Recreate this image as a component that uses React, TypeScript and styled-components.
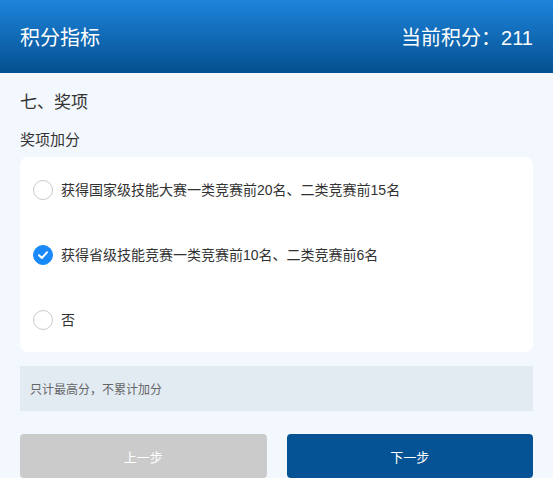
import React, { FC, useState } from 'react';
import styled, { createGlobalStyle } from 'styled-components';

const GlobalStyle = createGlobalStyle`
  * { box-sizing: border-box; }
  html, body {
    margin: 0;
    padding: 0;
    background: #F3F8FE;
    font-family: "Liberation Sans", "Noto Sans CJK SC", sans-serif;
  }
`

const Page = styled.div`
  width: 553px;
  min-height: 478px;
  background: #F3F8FE;
`
const Header = styled.header`
  display: flex;
  justify-content: space-between;
  align-items: center;
  height: 73px;
  padding: 0 20px;
  background: linear-gradient(180deg, #1E84DC 0%, #04508F 100%);
  color: #FFFFFF;
  font-size: 20px;
`
const Content = styled.div`
  padding: 18px 20px 0;
`
const SectionTitle = styled.div`
  font-size: 17px;
  line-height: 24px;
  color: #333333;
`
const SubTitle = styled.div`
  margin-top: 14px;
  font-size: 15px;
  line-height: 22px;
  color: #333333;
`
const Card = styled.div`
  margin-top: 6px;
  background: #FFFFFF;
  border-radius: 8px;
`
const Option = styled.label`
  display: flex;
  align-items: center;
  height: 65px;
  padding: 0 13px;
  cursor: pointer;
`
const RadioIcon = styled.span<{checked: boolean}>`
  display: flex;
  justify-content: center;
  align-items: center;
  width: 20px;
  height: 20px;
  border-radius: 50%;
  border: 1px solid ${props => props.checked ? '#1989FA' : '#C8C9CC'};
  background: ${props => props.checked ? '#1989FA' : '#FFFFFF'};
  flex-shrink: 0;
`
const OptionText = styled.span`
  margin-left: 8px;
  font-size: 14px;
  line-height: 20px;
  color: #323233;
`
const Tip = styled.div`
  display: flex;
  align-items: center;
  margin-top: 14px;
  height: 45px;
  padding: 0 10px;
  background: #E2EBF2;
  font-size: 12px;
  color: #666666;
`
const Buttons = styled.div`
  display: grid;
  grid-template-columns: 1fr 1fr;
  gap: 20px;
  margin-top: 23px;
`
const StepButton = styled.button<{primary?: boolean}>`
  height: 44px;
  border: none;
  border-radius: 4px;
  background: ${props => props.primary ? '#055294' : '#CBCBCB'};
  color: #FFFFFF;
  font-family: inherit;
  font-size: 13px;
`

const options = [
    '获得国家级技能大赛一类竞赛前20名、二类竞赛前15名',
    '获得省级技能竞赛一类竞赛前10名、二类竞赛前6名',
    '否',
]

const App: FC = () => {
    const [selected, setSelected] = useState<number>(1)

    return (
        <Page>
            <GlobalStyle />
            <Header>
                <span>积分指标</span>
                <span>当前积分：211</span>
            </Header>
            <Content>
                <SectionTitle>七、奖项</SectionTitle>
                <SubTitle>奖项加分</SubTitle>
                <Card>
                    {options.map((text, i) => (
                        <Option key={i} onClick={() => setSelected(i)}>
                            <RadioIcon checked={selected === i}>
                                {selected === i && (
                                    <svg width="12" height="12" viewBox="0 0 12 12" fill="none">
                                        <path d="M2 6.2L4.9 9L10 3.3" stroke="#FFFFFF" strokeWidth="2" strokeLinecap="round" strokeLinejoin="round"/>
                                    </svg>
                                )}
                            </RadioIcon>
                            <OptionText>{text}</OptionText>
                        </Option>
                    ))}
                </Card>
                <Tip>只计最高分，不累计加分</Tip>
                <Buttons>
                    <StepButton>上一步</StepButton>
                    <StepButton primary>下一步</StepButton>
                </Buttons>
            </Content>
        </Page>
    );
};

export default App;
